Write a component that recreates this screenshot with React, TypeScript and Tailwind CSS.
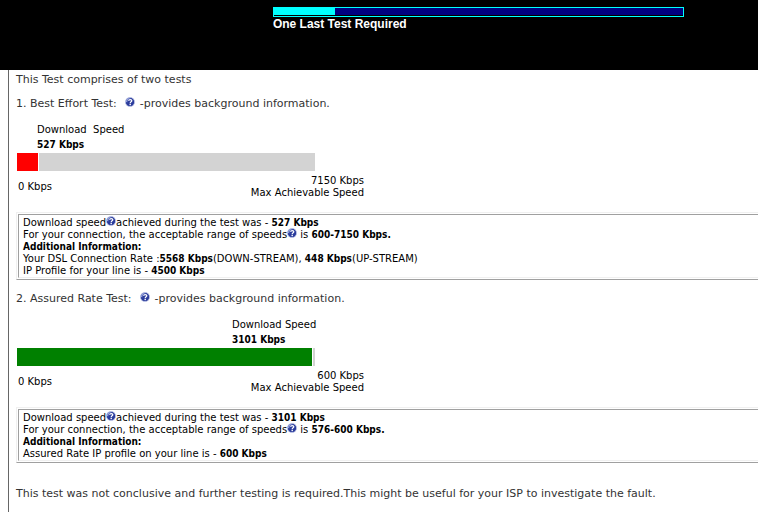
import type { ReactNode } from "react";

const progress = 15;

function HelpIcon() {
    return (
        <svg viewBox="0 0 10 10" className="-my-1 inline-block size-[10px] align-[4px]" role="img" aria-label="Help">
            <circle cx="5" cy="5" r="4.6" fill="#2b3c9c" stroke="#c3caea" strokeWidth="0.7" />
            <path d="M0.9 4.8A4.1 4.1 0 0 1 6.2 1C3.6 1.3 2.2 2.8 2.2 5.4Z" fill="#98a5de" />
            <path d="M3.6 3.7C3.7 2.2 6.8 2.1 6.8 3.8C6.8 4.9 5.2 4.8 5.2 6.2" fill="none" stroke="#fff" strokeWidth="1.3" />
            <rect x="4.5" y="6.9" width="1.4" height="1.3" fill="#fff" />
        </svg>
    );
}

function Strong({ children }: { children: ReactNode }) {
    return <b className="font-['DejaVu_Sans_Condensed','DejaVu_Sans',sans-serif] font-bold">{children}</b>;
}

type SpeedTestProps = {
    title: string;
    speed: string;
    max: string;
    label: ReactNode;
    labelClass: string;
    fillClass: string;
    children: ReactNode;
};

function SpeedTest({ title, speed, max, label, labelClass, fillClass, children }: SpeedTestProps) {
    return (
        <section>
            <h2 className="pl-2 text-[11px] leading-4 text-[#333]">
                {title}
                <span className="mr-[5px] ml-2">
                    <HelpIcon />
                </span>
                -provides background information.
            </h2>

            {/* Speed bar */}
            <div className="mt-3 pl-[9px]">
                <div className={labelClass}>
                    <p>{label}</p>
                    <p className="mt-[3px]">
                        <Strong>{speed}</Strong>
                    </p>
                </div>
                <div className="mt-[2px] flex h-[18px] w-[298px] gap-px">
                    <div className={fillClass} />
                    <div className="grow bg-[#d3d3d3]" />
                </div>
                <div className="mt-1 flex w-[347px] items-center justify-between pl-px">
                    <p>0 Kbps</p>
                    <p className="text-right">
                        {max}
                        <br />
                        Max Achievable Speed
                    </p>
                </div>
            </div>

            {/* Results */}
            <div className="mt-[13px] ml-2 border border-r-0 border-t-[#f0f0f0] border-b-[#a0a0a0] border-l-[#f0f0f0] py-px pl-px">
                <div className="border border-r-0 border-t-[#a0a0a0] border-b-[#f0f0f0] border-l-[#a0a0a0] pt-[2px] pl-1">{children}</div>
            </div>
        </section>
    );
}

export default function App() {
    return (
        <div className="min-h-screen overflow-x-hidden bg-white font-['DejaVu_Sans',sans-serif] text-[10px] leading-3 text-black">
            <header className="h-[70px] bg-black pt-[7px] pl-[36%]">
                <div className="h-[10px] w-[411px] border border-[#00ffff] bg-[#000080]">
                    <div className="h-2 border-b border-black">
                        <div className="h-[7px] bg-[#00ffff]" style={{ width: `${progress}%` }} />
                    </div>
                </div>
                <h1 className="font-['Liberation_Sans',Arial,sans-serif] text-[12px] leading-[14px] font-bold text-white">One Last Test Required</h1>
            </header>

            <main className="ml-2 min-h-[442px] border-l border-[#666] pt-[2px] pb-3">
                <p className="pl-[7px] text-[11px] leading-4 text-[#333]">This Test comprises of two tests</p>

                <div className="mt-2 -ml-px flex flex-col gap-[11px]">
                    <SpeedTest
                        title="1. Best Effort Test:"
                        speed="527 Kbps"
                        max="7150 Kbps"
                        label={<>Download&nbsp; Speed</>}
                        labelClass="pl-5"
                        fillClass="w-[21px] bg-[#ff0000]"
                    >
                        <p>
                            Download speed<HelpIcon />achieved during the test was - <Strong>527 Kbps</Strong>
                        </p>
                        <p>
                            For your connection, the acceptable range of speeds<HelpIcon /> is <Strong>600-7150 Kbps.</Strong>
                        </p>
                        <p>
                            <Strong>Additional Information:</Strong>
                        </p>
                        <p>
                            Your DSL Connection Rate :<Strong>5568 Kbps</Strong>(DOWN-STREAM), <Strong>448 Kbps</Strong>(UP-STREAM)
                        </p>
                        <p>
                            IP Profile for your line is - <Strong>4500 Kbps</Strong>
                        </p>
                    </SpeedTest>

                    <SpeedTest
                        title="2. Assured Rate Test:"
                        speed="3101 Kbps"
                        max="600 Kbps"
                        label="Download Speed"
                        labelClass="pl-[215px]"
                        fillClass="w-[295px] bg-[#008000]"
                    >
                        <p>
                            Download speed<HelpIcon />achieved during the test was - <Strong>3101 Kbps</Strong>
                        </p>
                        <p>
                            For your connection, the acceptable range of speeds<HelpIcon /> is <Strong>576-600 Kbps.</Strong>
                        </p>
                        <p>
                            <Strong>Additional Information:</Strong>
                        </p>
                        <p>
                            Assured Rate IP profile on your line is - <Strong>600 Kbps</Strong>
                        </p>
                    </SpeedTest>
                </div>

                <p className="mt-[23px] pl-[7px] text-[11px] leading-4 text-[#333]">
                    This test was not conclusive and further testing is required.This might be useful for your ISP to investigate the fault.
                </p>
            </main>
        </div>
    );
}
